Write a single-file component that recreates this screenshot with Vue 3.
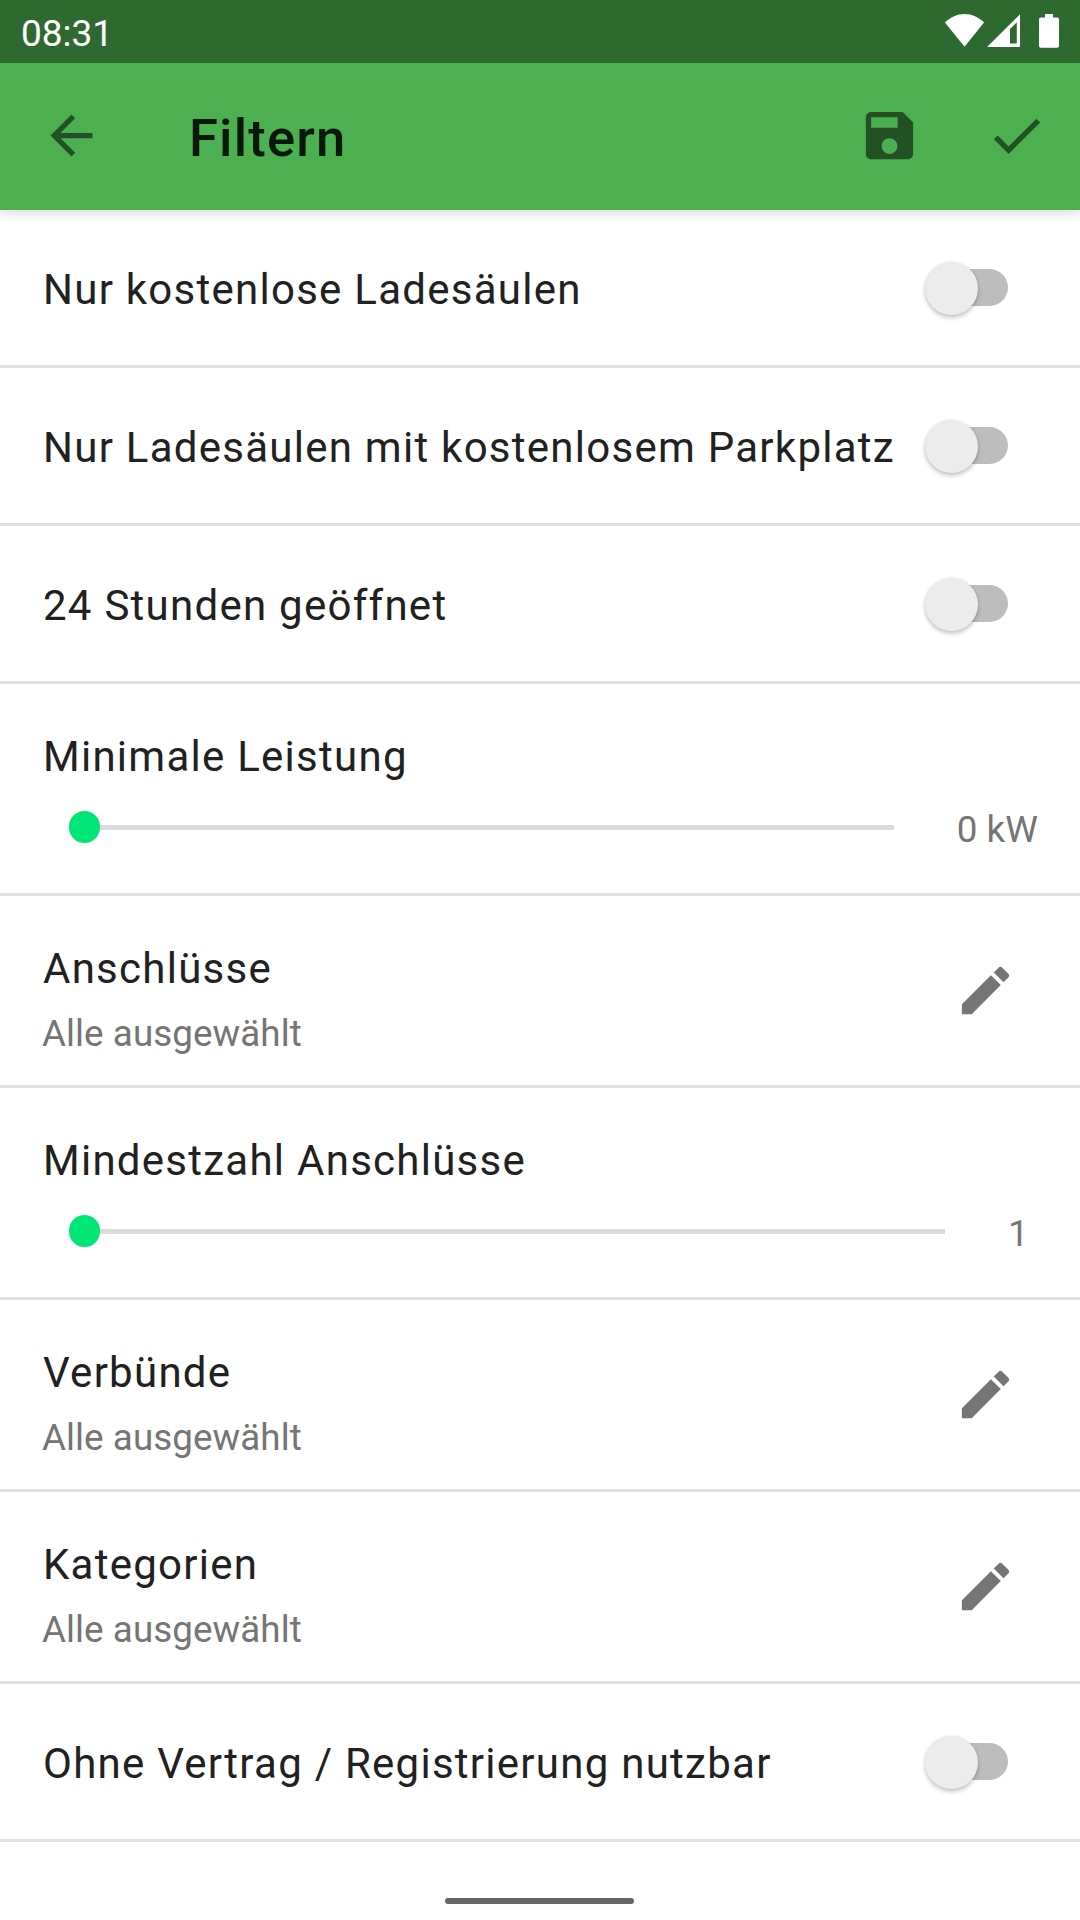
<script setup>
const rows = [
  { type: 'switch', label: 'Nur kostenlose Ladesäulen' },
  { type: 'switch', label: 'Nur Ladesäulen mit kostenlosem Parkplatz' },
  { type: 'switch', label: '24 Stunden geöffnet' },
  { type: 'slider', label: 'Minimale Leistung', value: '0 kW' },
  { type: 'choice', label: 'Anschlüsse', value: 'Alle ausgewählt' },
  { type: 'slider', label: 'Mindestzahl Anschlüsse', value: '1' },
  { type: 'choice', label: 'Verbünde', value: 'Alle ausgewählt' },
  { type: 'choice', label: 'Kategorien', value: 'Alle ausgewählt' },
  { type: 'switch', label: 'Ohne Vertrag / Registrierung nutzbar' }
]
</script>

<template>
  <div class="screen">
    <div class="status">
      <span class="time">08:31</span>
      <svg class="indicators" width="116" height="36" viewBox="0 0 116 36" fill="#fff">
        <path d="M0 9.600C5.400 4 12.200 1 19.500 1S33.600 4 39 9.600L19.500 33.800z" />
        <path fill-rule="evenodd" d="M42 34L75 34L75 1.300zM65 16v14.400h6.800V9.300z" />
        <path d="M100 1h8v3.400h4.200a1.800 1.800 0 0 1 1.800 1.800V33a1.800 1.800 0 0 1-1.800 1.800H95.800A1.800 1.800 0 0 1 94 33V6.200a1.800 1.800 0 0 1 1.800-1.800H100z" />
      </svg>
    </div>

    <header class="toolbar">
      <svg class="icon back" viewBox="0 0 24 24"><path d="M20 11H7.800l5.600-5.600L12 4l-8 8 8 8 1.400-1.400L7.800 13H20z" /></svg>
      <h1>Filtern</h1>
      <svg class="icon save" viewBox="0 0 24 24"><path d="M17 3H5c-1.110 0-2 .9-2 2v14c0 1.100.89 2 2 2h14c1.100 0 2-.9 2-2V7l-4-4zm-5 16c-1.660 0-3-1.340-3-3s1.340-3 3-3 3 1.340 3 3-1.340 3-3 3zm3.100-10H5V5h10.100z" /></svg>
      <svg class="icon" viewBox="0 0 24 24"><path d="M9 16.170L4.830 12l-1.420 1.410L9 19 21 7l-1.410-1.410z" /></svg>
    </header>

    <main>
      <section v-for="row in rows" :key="row.label" class="row" :class="row.type">
        <template v-if="row.type === 'switch'">
          <span class="label">{{ row.label }}</span>
          <span class="toggle"><span class="knob"></span></span>
        </template>
        <template v-else-if="row.type === 'slider'">
          <span class="label">{{ row.label }}</span>
          <div class="control">
            <span class="thumb"></span>
            <span class="track"></span>
            <span class="value">{{ row.value }}</span>
          </div>
        </template>
        <template v-else>
          <div class="texts">
            <span class="label">{{ row.label }}</span>
            <span class="value">{{ row.value }}</span>
          </div>
          <svg class="icon edit" viewBox="0 0 24 24"><path d="M3 17.250V21h3.750L17.810 9.940l-3.750-3.750L3 17.250zM20.710 7.040c.39-.39.39-1.020 0-1.410l-2.340-2.340c-.39-.39-1.020-.39-1.410 0l-1.830 1.830 3.750 3.750 1.830-1.830z" /></svg>
        </template>
      </section>
    </main>

    <footer class="nav"><span class="handle"></span></footer>
  </div>
</template>

<style>
body {
  margin: 0;
  background: #fff;
}
</style>

<style scoped>
.screen {
  display: flex;
  flex-direction: column;
  width: 1080px;
  height: 1920px;
  overflow: hidden;
  background: #fff;
  color: #212121;
  font-family: Roboto, sans-serif;
}
.status {
  position: relative;
  z-index: 1;
  display: flex;
  justify-content: space-between;
  box-sizing: border-box;
  height: 63px;
  padding: 13px 19px 0 21px;
  background: #2e6a30;
  color: #fff;
}
.time {
  margin-top: -1px;
  font-size: 37px;
  line-height: 44px;
}
.toolbar {
  display: flex;
  align-items: center;
  box-sizing: border-box;
  height: 147px;
  padding: 0 32px 2px 40px;
  background: #4caf50;
  box-shadow: 0 2px 13px rgba(0, 0, 0, 0.17);
}
h1 {
  flex: 1;
  margin: 5px 0 0 86px;
  color: #0a170b;
  font-size: 52.5px;
  font-weight: 500;
  line-height: 62px;
  letter-spacing: 1.2px;
}
.icon {
  flex: none;
  width: 63px;
  height: 63px;
  fill: #235025;
}
.save {
  margin-right: 64px;
}
.row {
  display: flex;
  box-sizing: border-box;
  border-bottom: 3px solid #e0e0e0;
}
.label {
  margin-left: 1px;
  font-size: 42px;
  line-height: 50px;
  letter-spacing: 1.26px;
  white-space: nowrap;
}
.value {
  color: #757575;
  font-size: 36.75px;
  line-height: 44px;
  letter-spacing: 0.08px;
  white-space: nowrap;
}
.switch {
  align-items: center;
  justify-content: space-between;
  height: 158px;
  padding: 0 72px 0 42px;
}
.switch .label {
  margin-top: 4px;
}
.toggle {
  display: flex;
  align-items: center;
  width: 74px;
  height: 37px;
  border-radius: 19px;
  background: #bdbdbd;
}
.knob {
  flex: none;
  width: 53px;
  height: 53px;
  margin: 1px 0 0 -9px;
  border-radius: 50%;
  background: #ececec;
  box-shadow: 0 3px 4px rgba(0, 0, 0, 0.2), 0 0 3px rgba(0, 0, 0, 0.1);
}
.slider {
  flex-direction: column;
  height: 212px;
  padding: 48px 42px 0;
}
.control {
  display: flex;
  align-items: center;
  height: 44px;
  margin-top: 23px;
  padding-left: 26.500px;
}
.thumb {
  flex: none;
  width: 31.500px;
  height: 31.500px;
  border-radius: 50%;
  background: #00e676;
}
.track {
  flex: 1;
  height: 5px;
  background: #dbdbdb;
}
.control .value {
  min-width: 30px;
  margin: 5px 0 0 63px;
}
.choice {
  align-items: center;
  justify-content: space-between;
  height: 192px;
  padding: 0 63px 0 42px;
}
.texts {
  display: flex;
  flex-direction: column;
  gap: 18px;
  margin-top: 19px;
}
.edit {
  fill: #757575;
}
.nav {
  display: flex;
  flex: 1;
  align-items: flex-end;
  justify-content: center;
  padding: 0 1px 16px 0;
}
.handle {
  width: 189px;
  height: 6px;
  border-radius: 3px;
  background: #666;
}
</style>
